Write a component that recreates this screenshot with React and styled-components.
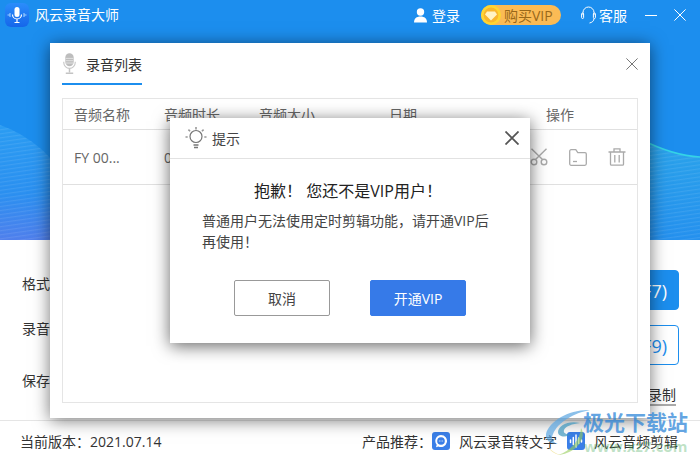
import React from "react";
import styled, { createGlobalStyle } from "styled-components";

const GlobalStyle = createGlobalStyle`
  html, body { margin: 0; padding: 0; background: #fff; }
  body { font-family: "Open Sans", "Noto Sans CJK SC", sans-serif; font-size: 14px; color: #333; }
  * { box-sizing: border-box; }
`;

const Window = styled.div`
  position: relative;
  width: 700px;
  height: 460px;
  overflow: hidden;
  background: #fff;
  display: flex;
  flex-direction: column;
`;

/* blue top area */
const Hero = styled.header`
  position: relative;
  height: 240px;
  flex: none;
  background: #1c8eee;
`;
const Waves = styled.svg`
  position: absolute;
  left: 0;
  top: 0;
`;
const TitleBar = styled.div`
  position: relative;
  height: 30px;
  display: flex;
  align-items: center;
  padding: 0 14px 0 5px;
  color: #fff;
`;
const AppName = styled.span`
  margin-left: 6px;
  flex: 1;
  line-height: 30px;
`;
const BarItem = styled.span`
  display: flex;
  align-items: center;
  gap: ${(p) => p.$gap || 4}px;
  margin-right: ${(p) => p.$right || 0}px;
`;
const VipPill = styled.span`
  display: flex;
  align-items: center;
  width: 80px;
  height: 20px;
  border-radius: 10px;
  background: #fbbb55;
  color: #99681a;
  margin-right: 20px;
  gap: 3px;
  white-space: nowrap;
`;
const BarButton = styled.button`
  border: 0;
  padding: 0;
  background: none;
  display: flex;
  margin-left: ${(p) => p.$left || 0}px;
`;

/* settings behind the list */
const Settings = styled.section`
  flex: 1;
  display: flex;
  justify-content: space-between;
  padding: 30px 21px 0 22px;
`;
const Labels = styled.div`
  display: flex;
  flex-direction: column;
  padding-top: 4px;
`;
const Label = styled.div`
  line-height: 20px;
  margin-bottom: ${(p) => p.$gap || 0}px;
`;
const Actions = styled.div`
  width: 130px;
  display: flex;
  flex-direction: column;
  align-items: flex-end;
`;
const RecordButton = styled.button`
  width: 130px;
  height: 40px;
  border-radius: 4px;
  border: 1px solid #1c8eee;
  background: ${(p) => (p.$solid ? "#1c8eee" : "#fff")};
  color: ${(p) => (p.$solid ? "#fff" : "#1c8eee")};
  font: inherit;
  font-size: 18px;
  text-align: right;
  padding: 0 11px 0 0;
  margin-bottom: 15px;
  white-space: nowrap;
`;
const TimerLink = styled.span`
  margin: 6px 3px 0 0;
  line-height: 18px;
  border-bottom: 2px solid #aaa;
`;

const Footer = styled.footer`
  height: 40px;
  flex: none;
  border-top: 1px solid #e5e5e5;
  display: flex;
  align-items: center;
  justify-content: space-between;
  padding: 0 22px 0 20px;
`;
const Products = styled.div`
  display: flex;
  align-items: center;
`;
const ProductIcon = styled.span`
  width: 18px;
  height: 18px;
  border-radius: 3px;
  background: #3a7fe8;
  display: flex;
  align-items: center;
  justify-content: center;
  margin: ${(p) => p.$margin};
`;

/* recording list window */
const Panel = styled.div`
  position: absolute;
  left: 50px;
  top: 43px;
  width: 600px;
  height: 375px;
  background: #fff;
  box-shadow: 0 2px 16px rgba(0, 0, 0, 0.55);
  padding: 0 12px 15px;
  display: flex;
  flex-direction: column;
`;
const PanelHead = styled.div`
  height: 55px;
  flex: none;
  display: flex;
  align-items: flex-start;
  justify-content: space-between;
`;
const PanelTab = styled.div`
  width: 80px;
  height: 42px;
  border-bottom: 2px solid #1c8eee;
  display: flex;
  align-items: center;
  gap: 10px;
  padding: 1px 0 0 1px;
  color: #333;
  white-space: nowrap;
`;
const PanelClose = styled.button`
  border: 0;
  padding: 0;
  background: none;
  display: flex;
  margin-top: 15px;
`;
const Table = styled.div`
  flex: 1;
  border: 1px solid #e5e5e5;
  color: #666;
`;
const TableRow = styled.div`
  display: grid;
  grid-template-columns: 90px 95px 130px 157px 1fr;
  align-items: center;
  height: ${(p) => p.$height}px;
  padding-left: 11px;
  border-bottom: 1px solid #e0e0e0;
`;
const RowTools = styled.div`
  display: flex;
  align-items: center;
  gap: 21px;
  margin-left: -16px;
`;

/* VIP prompt */
const Dialog = styled.div`
  position: absolute;
  left: 170px;
  top: 118px;
  width: 360px;
  height: 225px;
  background: #fff;
  box-shadow: 0 3px 16px rgba(0, 0, 0, 0.6);
`;
const DialogHead = styled.div`
  height: 41px;
  border-bottom: 1px solid #e2e2e2;
  display: flex;
  align-items: center;
  gap: 5px;
  padding: 0 11px 0 15px;
`;
const DialogTitle = styled.span`
  flex: 1;
  color: #444;
`;
const Heading = styled.div`
  margin-top: 21px;
  padding-right: 4px;
  text-align: center;
  font-size: 16px;
  line-height: 22px;
  color: #222;
  white-space: pre;
`;
const Message = styled.p`
  margin: 8px 0 0;
  padding: 0 32px;
  line-height: 21px;
  color: #444;
`;
const DialogActions = styled.div`
  display: flex;
  justify-content: center;
  gap: 40px;
  margin-top: 28px;
`;
const DialogButton = styled.button`
  width: 96px;
  height: 36px;
  border-radius: 2px;
  font: inherit;
  border: 1px solid ${(p) => (p.$primary ? "#367ae8" : "#999")};
  background: ${(p) => (p.$primary ? "#367ae8" : "#fff")};
  color: ${(p) => (p.$primary ? "#fff" : "#444")};
`;

/* site watermark lying over the corner */
const Watermark = styled.div`
  position: absolute;
  left: 544px;
  top: 408px;
  width: 150px;
  height: 50px;
  pointer-events: none;
`;
const MarkName = styled.span`
  position: absolute;
  left: 39px;
  top: 2px;
  font-size: 21px;
  line-height: 24px;
  font-weight: 700;
  white-space: nowrap;
  color: rgba(40, 130, 215, 0.72);
`;
const MarkUrl = styled.span`
  position: absolute;
  left: 40px;
  top: 28px;
  font-size: 15px;
  line-height: 20px;
  font-weight: 700;
  white-space: nowrap;
  color: rgba(70, 170, 90, 0.35);
`;

function AppLogo() {
  return (
    <svg width="24" height="24" viewBox="0 0 24 24">
      <defs>
        <linearGradient id="logoBg" x1="0" y1="0" x2="0" y2="1">
          <stop offset="0" stopColor="#2b8dfb" />
          <stop offset="1" stopColor="#1566ea" />
        </linearGradient>
      </defs>
      <rect width="24" height="24" rx="6" fill="url(#logoBg)" />
      <rect x="9.5" y="4" width="5" height="10" rx="2.5" fill="#fff" />
      <path d="M7.5 11.5a4.5 4.5 0 0 0 9 0M12 16v3M9.5 19.5h5" stroke="#fff" strokeWidth="1.2" fill="none" />
      <path d="M2.5 12h2M5 10v4M19 10v4M19.5 12h2" stroke="#9fd0ff" strokeWidth="1.1" />
    </svg>
  );
}

function UserIcon() {
  return (
    <svg width="15" height="15" viewBox="0 0 15 15" fill="#fff">
      <circle cx="7.5" cy="4" r="3.7" />
      <path d="M1 14.5c0-4 2.5-6 6.5-6s6.5 2 6.5 6z" />
    </svg>
  );
}

function GemCoin() {
  return (
    <svg width="20" height="20" viewBox="0 0 20 20">
      <circle cx="10" cy="10" r="10" fill="#fed632" />
      <circle cx="10" cy="10" r="7.4" fill="#f9b62c" />
      <path d="M6 6.5h8l2 3-6 6-6-6z" fill="#fff3c4" />
    </svg>
  );
}

function HeadsetIcon() {
  return (
    <svg width="15" height="18" viewBox="0 0 15 18" fill="none" stroke="#fff" strokeWidth="1">
      <path d="M2 9V6.5a5.5 5.5 0 0 1 11 0V9" />
      <rect x="0.6" y="7" width="2" height="5.5" rx="1" />
      <rect x="12.4" y="7" width="2" height="5.5" rx="1" />
      <path d="M13 12.5c0 2.5-2 4-4.5 4.5" />
    </svg>
  );
}

function CrossIcon({ size, color, width = 1 }) {
  return (
    <svg width={size} height={size} viewBox="0 0 12 12" stroke={color} strokeWidth={width} fill="none">
      <path d="M0.4 0.4l11.2 11.2M11.6 0.4L0.4 11.6" />
    </svg>
  );
}

function MicIcon() {
  return (
    <svg width="14" height="23" viewBox="0 0 14 23" fill="#bdbdbd">
      <rect x="2.5" y="0.5" width="9" height="14" rx="4.5" />
      <path d="M3 6h8M3 8.5h8M3 11h8" stroke="#eee" strokeWidth="0.8" />
      <path d="M0.8 9.5v1a6.2 6.2 0 0 0 12.4 0v-1" fill="none" stroke="#c8c8c8" strokeWidth="1.2" />
      <path d="M7 17v4M3 22h8" stroke="#c4c4c4" strokeWidth="1.6" />
    </svg>
  );
}

function ScissorsIcon() {
  return (
    <svg width="18" height="18" viewBox="0 0 18 18" fill="none" stroke="#aaa" strokeWidth="1.4">
      <circle cx="4" cy="14" r="2.8" />
      <circle cx="14" cy="14" r="2.8" />
      <path d="M5.5 11.6L16.5 0.8M12.5 11.6L1.5 0.8" />
    </svg>
  );
}

function FolderIcon() {
  return (
    <svg width="18" height="17" viewBox="0 0 18 17" fill="none" stroke="#aaa" strokeWidth="1.3">
      <path d="M0.7 2.2c0-.8.6-1.5 1.5-1.5h4.6l2 3h7.2c.8 0 1.3.6 1.3 1.3v9.8c0 .9-.6 1.5-1.5 1.5H2.2c-.9 0-1.5-.6-1.5-1.5z" />
      <path d="M4 12.5h4" />
    </svg>
  );
}

function TrashIcon() {
  return (
    <svg width="18" height="18" viewBox="0 0 18 18" fill="none" stroke="#aaa" strokeWidth="1.3">
      <path d="M0.5 4h17M6 4V0.8h6V4M2.5 4v12.2c0 .6.4 1 1 1h11c.6 0 1-.4 1-1V4M6.8 7v7.5M11.2 7v7.5" />
    </svg>
  );
}

function BulbIcon() {
  return (
    <svg width="22" height="24" viewBox="0 0 22 24" fill="none" stroke="#777" strokeWidth="1.2">
      <circle cx="11" cy="10.5" r="6" />
      <path d="M8.5 19h5M9 21.5h4" strokeWidth="1.4" />
      <path d="M11 1v2.4M3.4 3.6l1.7 1.7M18.6 3.6l-1.7 1.7M0.5 11h2.2M19.3 11h2.2" strokeWidth="1.6" stroke="#999" />
    </svg>
  );
}

function ChatGlyph() {
  return (
    <svg width="14" height="14" viewBox="0 0 14 14">
      <path d="M7 1a6 6 0 1 1-2.6 11.4L2 13.2l.7-2.4A6 6 0 0 1 7 1z" fill="#fff" />
      <circle cx="7" cy="7" r="3.8" fill="#3a7fe8" />
      <path d="M4.9 7h.8M6.6 7h.8M8.3 7h.8" stroke="#fff" strokeWidth="1" />
    </svg>
  );
}

function WaveGlyph() {
  return (
    <svg width="14" height="14" viewBox="0 0 14 14" stroke="#fff" strokeWidth="1.5" strokeLinecap="round">
      <path d="M1.5 6v2.5M4.3 3.5v7M7 1v12M9.7 4v5.5M12.5 6v2" />
    </svg>
  );
}

function HeroWaves() {
  return (
    <Waves width="700" height="240" viewBox="0 0 700 240">
      <defs>
        <linearGradient id="waveLeft" x1="0" y1="0" x2="0" y2="1">
          <stop offset="0" stopColor="#2a9cf2" />
          <stop offset="0.6" stopColor="#2a8ff0" />
          <stop offset="1" stopColor="#4f7fec" />
        </linearGradient>
        <linearGradient id="waveRight" x1="0" y1="0" x2="0" y2="1">
          <stop offset="0" stopColor="#2aa3ea" />
          <stop offset="1" stopColor="#2490ee" />
        </linearGradient>
        <pattern id="waveLines" width="6" height="4" patternUnits="userSpaceOnUse" patternTransform="rotate(-8)">
          <rect width="6" height="1.2" fill="rgba(255,255,255,0.09)" />
        </pattern>
      </defs>
      <path d="M0 125C20 132 40 146 50 158V240H0z" fill="url(#waveLeft)" />
      <path d="M0 125C20 132 40 146 50 158V240H0z" fill="url(#waveLines)" />
      <path d="M640 139C660 149 680 156 700 157V240H640z" fill="url(#waveRight)" />
      <path d="M640 139C660 149 680 156 700 157V240H640z" fill="url(#waveLines)" />
      <path d="M640 139C660 149 680 156 700 157" fill="none" stroke="#34d3e6" strokeWidth="1.4" />
    </Waves>
  );
}

function Swirl() {
  return (
    <svg width="48" height="48" viewBox="0 0 48 48">
      <path d="M46 2C26 1 5 13 2 26c-1 6 4 10 12 10-6-2-7-6-5-10C14 14 30 5 46 2z" fill="rgba(90,165,225,0.7)" />
      <path d="M36 15C24 12 14 18 14 24c0 5 8 6 14 2-6 1-9-1-8-4 2-4 8-6 16-7z" fill="rgba(60,150,190,0.7)" />
      <path d="M37 20c6 9-3 25-23 27 13-4 22-15 23-27z" fill="rgba(150,205,90,0.6)" />
      <path d="M4 38c3 5 8 8 14 9-5 0-12-3-14-9z" fill="rgba(235,215,110,0.6)" />
    </svg>
  );
}

export default function App() {
  return (
    <Window>
      <GlobalStyle />
      <Hero>
        <HeroWaves />
        <TitleBar>
          <AppLogo />
          <AppName>风云录音大师</AppName>
          <BarItem $right={21}>
            <UserIcon />
            登录
          </BarItem>
          <VipPill>
            <GemCoin />
            购买VIP
          </VipPill>
          <BarItem $gap={3} $right={18}>
            <HeadsetIcon />
            客服
          </BarItem>
          <BarButton>
            <svg width="12" height="12" viewBox="0 0 12 12" stroke="#fff">
              <path d="M0 6.5h12" />
            </svg>
          </BarButton>
          <BarButton $left={17}>
            <CrossIcon size={12} color="#fff" />
          </BarButton>
        </TitleBar>
      </Hero>

      <Settings>
        <Labels>
          <Label $gap={25}>格式</Label>
          <Label $gap={32}>录音</Label>
          <Label>保存</Label>
        </Labels>
        <Actions>
          <RecordButton $solid>开始录制(F7)</RecordButton>
          <RecordButton>结束录制(F9)</RecordButton>
          <TimerLink>定时录制</TimerLink>
        </Actions>
      </Settings>

      <Footer>
        <span>当前版本：2021.07.14</span>
        <Products>
          产品推荐：
          <ProductIcon $margin="0 9px 0 0">
            <ChatGlyph />
          </ProductIcon>
          风云录音转文字
          <ProductIcon $margin="0 9px 0 10px">
            <WaveGlyph />
          </ProductIcon>
          风云音频剪辑
        </Products>
      </Footer>

      <Panel>
        <PanelHead>
          <PanelTab>
            <MicIcon />
            录音列表
          </PanelTab>
          <PanelClose>
            <CrossIcon size={12} color="#777" />
          </PanelClose>
        </PanelHead>
        <Table>
          <TableRow $height={31}>
            <span>音频名称</span>
            <span>音频时长</span>
            <span>音频大小</span>
            <span>日期</span>
            <span>操作</span>
          </TableRow>
          <TableRow $height={55}>
            <span>FY 00...</span>
            <span>00:00:10</span>
            <span>156KB</span>
            <span>2021-07-14</span>
            <RowTools>
              <ScissorsIcon />
              <FolderIcon />
              <TrashIcon />
            </RowTools>
          </TableRow>
        </Table>
      </Panel>

      <Dialog>
        <DialogHead>
          <BulbIcon />
          <DialogTitle>提示</DialogTitle>
          <CrossIcon size={14} color="#555" width={1.5} />
        </DialogHead>
        <Heading>抱歉！ 您还不是VIP用户！</Heading>
        <Message>普通用户无法使用定时剪辑功能，请开通VIP后再使用！</Message>
        <DialogActions>
          <DialogButton>取消</DialogButton>
          <DialogButton $primary>开通VIP</DialogButton>
        </DialogActions>
      </Dialog>

      <Watermark>
        <Swirl />
        <MarkName>极光下载站</MarkName>
        <MarkUrl>www.xz7.com</MarkUrl>
      </Watermark>
    </Window>
  );
}
